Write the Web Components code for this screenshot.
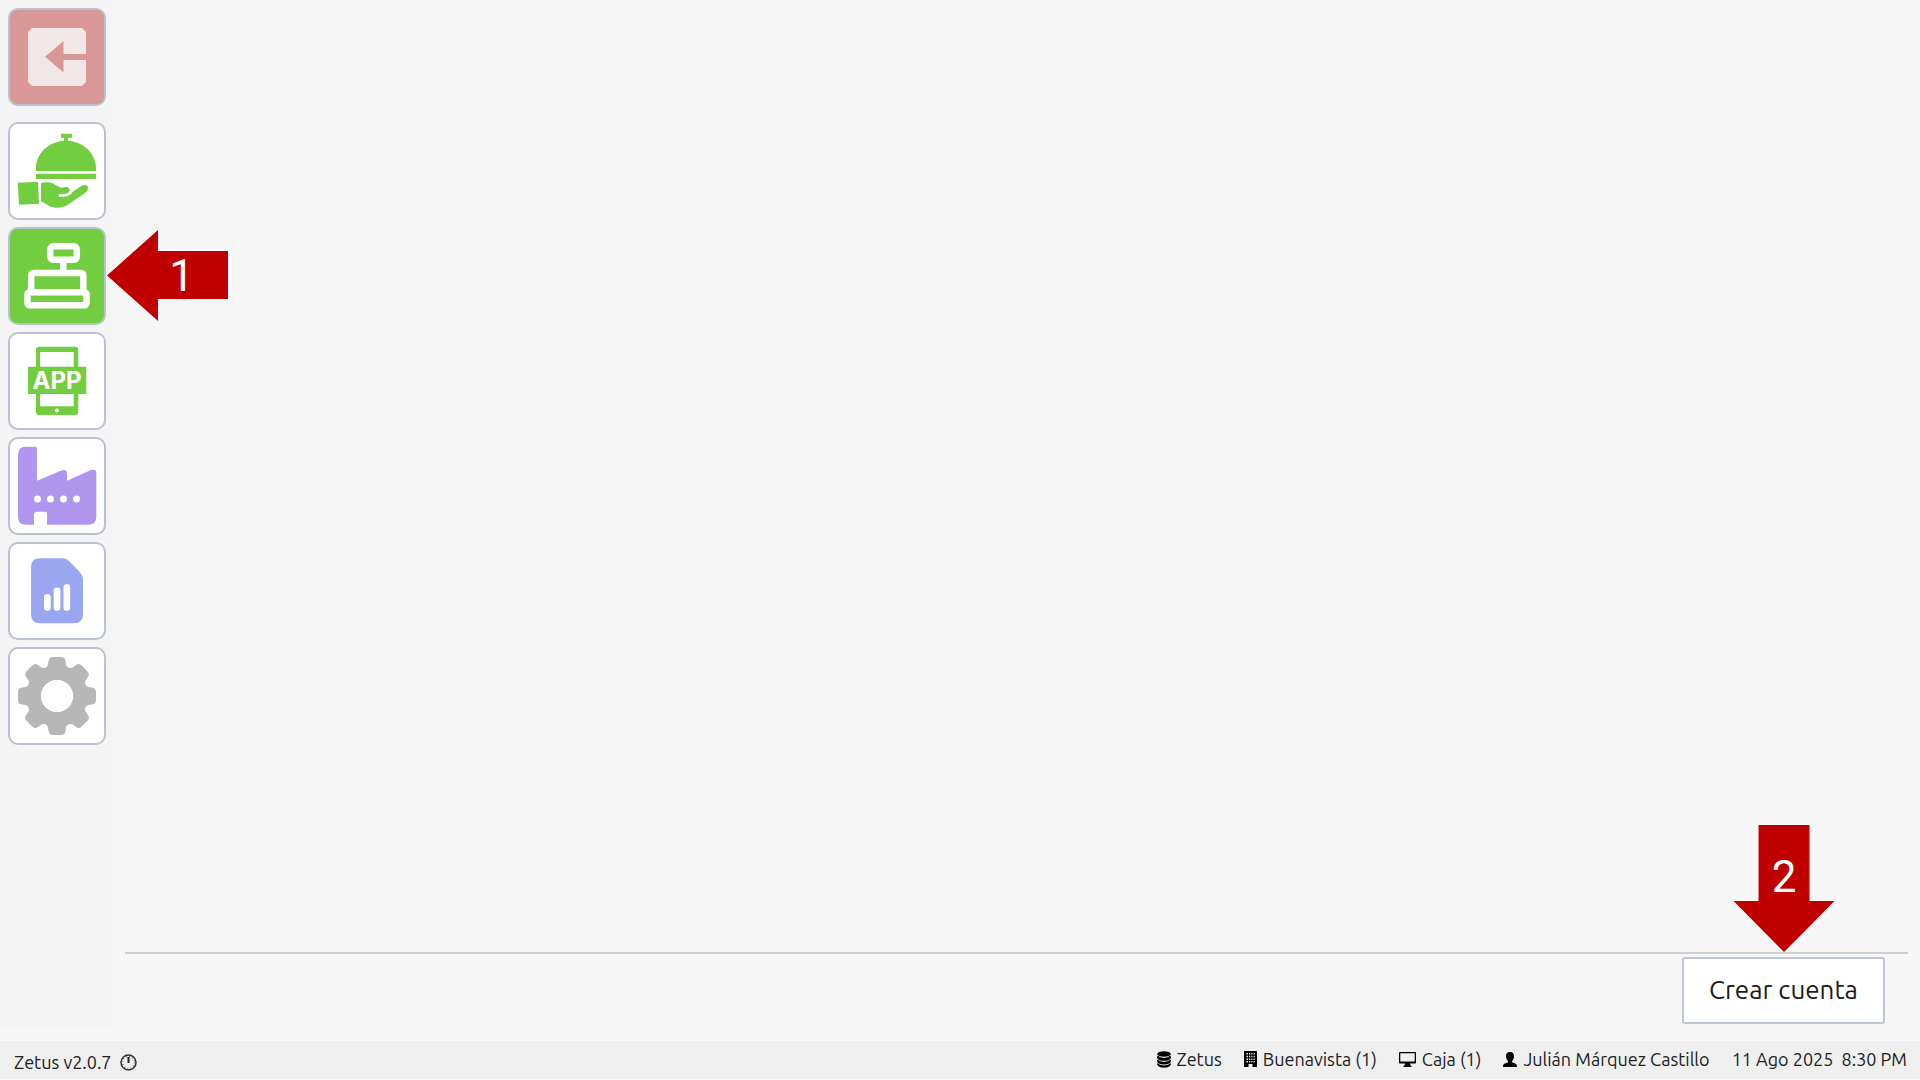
<!DOCTYPE html>
<html lang="es">
<head>
<meta charset="utf-8">
<title>Zetus</title>
<style>
  body {
    margin: 0;
    background: #f7f7f7;
    color: #222;
    font-family: "Ubuntu", "Noto Sans", sans-serif;
  }
</style>
</head>
<body>
<zetus-app></zetus-app>

<script>
// Square button of the side menu, the icon goes in the slot
class NavButton extends HTMLElement {
  constructor() {
    super();
    this.attachShadow({ mode: "open" });
  }

  connectedCallback() {
    this.shadowRoot.innerHTML = `
      <style>
        :host {
          display: block;
          --fill: #fff;
        }
        :host([kind="exit"]) {
          --fill: #d99797;
          margin-bottom: 9px;
        }
        :host([active]) {
          --fill: #73cd40;
        }
        button {
          display: block;
          box-sizing: border-box;
          width: 98px;
          height: 98px;
          padding: 0;
          border: 2px solid #b9c2d0;
          border-radius: 10px;
          background: var(--fill);
          overflow: hidden;
          cursor: pointer;
        }
        ::slotted(svg) {
          display: block;
          width: 94px;
          height: 94px;
        }
      </style>
      <button type="button" aria-label="${this.getAttribute("label")}"><slot></slot></button>
    `;
  }
}
customElements.define("nav-button", NavButton);

// Numbered red arrow, pointing left or down
class StepArrow extends HTMLElement {
  constructor() {
    super();
    this.attachShadow({ mode: "open" });
  }

  connectedCallback() {
    this.shadowRoot.innerHTML = `
      <style>
        :host {
          display: flex;
          align-items: center;
          justify-content: center;
          box-sizing: border-box;
          background: #c00000;
          color: #fff;
          font: 44px/48px "Roboto", sans-serif;
        }
        :host([to="left"]) {
          width: 121px;
          height: 91px;
          padding-left: 28px;
          clip-path: polygon(0 50%, 51px 0, 51px 21px, 100% 21px, 100% 69px, 51px 69px, 51px 100%);
        }
        :host([to="down"]) {
          width: 101px;
          height: 127px;
          padding-bottom: 24px;
          clip-path: polygon(25px 0, 76px 0, 76px 76px, 100% 76px, 50% 100%, 0 76px, 25px 76px);
        }
      </style>
      <slot></slot>
    `;
  }
}
customElements.define("step-arrow", StepArrow);

// One entry of the status bar: icon and text
class StatusItem extends HTMLElement {
  constructor() {
    super();
    this.attachShadow({ mode: "open" });
    this.shadowRoot.innerHTML = `
      <style>
        :host {
          display: flex;
          align-items: center;
          gap: 6px;
          white-space: nowrap;
        }
      </style>
      <slot name="icon"></slot><span><slot></slot></span>
    `;
  }
}
customElements.define("status-item", StatusItem);

class StatusBar extends HTMLElement {
  constructor() {
    super();
    this.attachShadow({ mode: "open" });
  }

  connectedCallback() {
    this.shadowRoot.innerHTML = `
      <style>
        :host {
          display: block;
        }
        footer {
          display: flex;
          justify-content: space-between;
          align-items: flex-start;
          height: 38px;
          box-sizing: border-box;
          padding: 6px 13px 0 14px;
          background: #efefef;
          font-size: 18px;
          line-height: 24px;
        }
        .version {
          display: flex;
          align-items: center;
          gap: 8px;
          padding-top: 3px;
        }
        .info {
          display: flex;
          gap: 22px;
        }
        svg {
          display: block;
          fill: #000;
        }
      </style>
      <footer>
        <div class="version">
          <span>Zetus v2.0.7</span>
          <svg width="17" height="17" viewBox="0 0 17 17">
            <circle cx="8.500" cy="8.500" r="7.500" fill="none" stroke="#333" stroke-width="1.500"/>
            <circle cx="8.500" cy="8.500" r="6" fill="none" stroke="#555" stroke-width="1.500" stroke-dasharray="0.800 2.340"/>
            <path d="M7.500 3h2v6h-2z" fill="#222"/>
          </svg>
        </div>
        <div class="info">
          <status-item>
            <svg slot="icon" width="14" height="17" viewBox="0 0 14 17">
              <ellipse cx="7" cy="3" rx="6.800" ry="2.800"/>
              <path d="M.2 4.600q2.800 2.400 6.800 2.400t6.800-2.400v2.600q-1.500 2.600-6.800 2.600T.2 7.200zM.2 8.600q2.800 2.400 6.800 2.400t6.800-2.400v2.200q-1.500 2.600-6.800 2.600T.2 10.800zM.2 12.100q2.800 2.400 6.800 2.400t6.800-2.400v1.700q-1.500 2.900-6.800 2.900T.2 13.800z"/>
            </svg>Zetus</status-item>
          <status-item>
            <svg slot="icon" width="13" height="16" viewBox="0 0 13 16">
              <path fill-rule="evenodd" d="M0 0h13v16H8.500v-3h-4v3H0zM2.500 2v1.500H4V2zM5 2v1.500h1.200V2zM7.300 2v1.500h1.200V2zM9.600 2v1.500h1.200V2zM2.500 4.700v1.500H4V4.700zM5 4.700v1.500h1.200V4.700zM7.300 4.700v1.500h1.200V4.700zM9.600 4.700v1.500h1.200V4.700zM2.500 7.400v1.500H4V7.400zM5 7.400v1.500h1.200V7.400zM7.300 7.400v1.500h1.200V7.400zM9.600 7.400v1.500h1.200V7.400zM2.500 10.100v1.400H4v-1.400zM5 10.100v1.400h1.200v-1.400zM7.300 10.100v1.400h1.200v-1.400zM9.600 10.100v1.400h1.200v-1.400z"/>
            </svg>Buenavista (1)</status-item>
          <status-item>
            <svg slot="icon" width="17" height="15" viewBox="0 0 17 15">
              <path fill-rule="evenodd" d="M1 0h15q1 0 1 1v9.500q0 1-1 1h-5l.5 2.200h1V15H4.500v-1.300h1l.5-2.200H1q-1 0-1-1V1q0-1 1-1zM1.300 1.300v8.200h14.400V1.300z"/>
            </svg>Caja (1)</status-item>
          <status-item>
            <svg slot="icon" width="14" height="15" viewBox="0 0 14 15">
              <path d="M7 0c3 0 4.200 2 4 4.500-.2 2-1 3.500-2 4.500v1.200l3.800 1.500q1.200.6 1.200 3.300H0q0-2.700 1.200-3.300L5 10.200V9C4 8 3.200 6.500 3 4.500 2.800 2 4 0 7 0z"/>
            </svg>Julián Márquez Castillo</status-item>
          <status-item>11 Ago 2025&nbsp; 8:30 PM</status-item>
        </div>
      </footer>
    `;
  }
}
customElements.define("status-bar", StatusBar);

// Side menu with all the modules
class SideMenu extends HTMLElement {
  constructor() {
    super();
    this.attachShadow({ mode: "open" });
  }

  getGear() {
    let teeth = "";
    for (let a = 0; a < 360; a += 45) {
      teeth += `<path transform="rotate(${a} 49 49)" d="M35 22Q40 20 40 17L41 12Q42 10 45 10H53Q56 10 57 12L58 17Q58 20 63 22L58 30H40z"/>`;
    }
    return `
      <svg viewBox="2 2 94 94" fill="#b7b7b7">
        ${teeth}
        <circle cx="49" cy="49" r="23" fill="none" stroke="#b7b7b7" stroke-width="14"/>
        <circle cx="49" cy="49" r="16" fill="#fff"/>
      </svg>`;
  }

  connectedCallback() {
    this.shadowRoot.innerHTML = `
      <style>
        :host {
          display: block;
          background: #f4f4f4;
        }
        nav {
          display: flex;
          flex-direction: column;
          gap: 7px;
          padding: 8px 7px 8px 8px;
        }
        text {
          font: bold 24px "Inter", sans-serif;
        }
      </style>
      <nav>
        <nav-button kind="exit" label="Salir">
          <svg viewBox="2 2 94 94">
            <path fill="#f2e7e7" d="M24 20H74L78 24V46H55.500V33L37 48.700L55.500 64.500V52H78V74L74 78H24L20 74V24z"/>
          </svg>
        </nav-button>
        <nav-button label="Servicio">
          <svg viewBox="2 2 94 94" fill="#73cd40">
            <path d="M53 11.700H64V15.700H60V18.800C76 20 88 32 88 46V49H28V46C28 32 40 20 56 18.800V15.700H53z"/>
            <path d="M28 51.700H88V57H28zM9.700 60.700L30 59.700L31 81.700L11 82.700z"/>
            <path d="M33 61Q37 60 41 60.300C46 61 49 65 53.700 65.700C56 65 57 64.700 59 65Q62 66 61.700 68.500C61 71 59 71.700 57 72L51 72.300Q49.500 74.700 52 74.800C57 75 60 74.500 62.500 72.500L65 69.500L74 63.500C78 62 80.500 63.500 80 66.500Q79.500 69.500 77 71L61 82C57 85 52 86 47 85.700C41 85 38 81.500 33 79.300z"/>
          </svg>
        </nav-button>
        <nav-button label="Caja" active>
          <svg viewBox="2 2 94 94" fill="none" stroke="#fff" stroke-width="6.500">
            <rect x="42.300" y="19.300" width="26.500" height="13.500" rx="3"/>
            <path d="M55.300 35V44M23.200 64V49Q23.200 46 26 46H72.500Q75.300 46 75.300 49V64"/>
            <rect x="19.500" y="65.300" width="59" height="13" rx="2"/>
          </svg>
        </nav-button>
        <nav-button label="App">
          <svg viewBox="2 2 94 94" fill="#73cd40">
            <path fill-rule="evenodd" d="M31 14.700H67.300Q70.300 14.700 70.300 18V80Q70.300 83 67.300 83H31Q28 83 28 80V18Q28 14.700 31 14.700zM32 20V74.300H65.700V20z"/>
            <path d="M20 34.700H78.300V62H20z"/>
            <circle cx="49" cy="78.500" r="2" fill="#fff"/>
            <text x="49" y="57" text-anchor="middle" fill="#fff">APP</text>
          </svg>
        </nav-button>
        <nav-button label="Producción">
          <svg viewBox="2 2 94 94" fill="#b096ee">
            <path d="M18 9.700H27Q29 9.700 29 12V43.700L54 33.200Q59 32 59 36V43.700L83 33Q88.300 31.500 88.300 36V79.700Q88.300 87.700 80.300 87.700H39V76.700Q39 74.700 37 74.700H29Q26 74.700 26 77.700V87.700H18Q10 87.700 10 79.700V17.700Q10 9.700 18 9.700z"/>
            <g fill="#fff">
              <circle cx="29.500" cy="62" r="3.500"/>
              <circle cx="42.500" cy="62" r="3.500"/>
              <circle cx="55.500" cy="62" r="3.500"/>
              <circle cx="68.500" cy="62" r="3.500"/>
            </g>
          </svg>
        </nav-button>
        <nav-button label="Reportes">
          <svg viewBox="2 2 94 94" fill="#9aa6f0">
            <path d="M32 16.300H55.500Q58.500 16.300 61 19L72 30.300Q75 33.500 75 38V72.300Q75 81.300 66 81.300H32Q23 81.300 23 72.300V25.300Q23 16.300 32 16.300z"/>
            <g fill="#fff">
              <rect x="36" y="52" width="6.700" height="16.700" rx="3.300"/>
              <rect x="45.700" y="45.500" width="6.700" height="23.200" rx="3"/>
              <rect x="55.500" y="42.300" width="6.700" height="26.400" rx="3"/>
            </g>
          </svg>
        </nav-button>
        <nav-button label="Configuración">${this.getGear()}</nav-button>
      </nav>
    `;
  }
}
customElements.define("side-menu", SideMenu);

class ZetusApp extends HTMLElement {
  constructor() {
    super();
    this.attachShadow({ mode: "open" });
  }

  connectedCallback() {
    this.shadowRoot.innerHTML = `
      <style>
        :host {
          display: grid;
          grid-template: 1fr auto / auto 1fr;
          row-gap: 12px;
          min-height: 100vh;
          box-sizing: border-box;
          padding-bottom: 1px;
        }
        main {
          display: flex;
          flex-direction: column;
          padding: 0 12px;
        }
        .work {
          flex: 1;
        }
        .actions {
          display: flex;
          justify-content: flex-end;
          padding: 3px 23px 5px;
          border-top: 2px solid #cdcfd1;
        }
        .action {
          position: relative;
        }
        .action button {
          height: 67px;
          padding: 0 25px 2px;
          border: 2px solid #bcc6d4;
          border-radius: 3px;
          background: #fff;
          color: #1c1c1c;
          font: 26px/32px "Ubuntu", "Noto Sans", sans-serif;
          cursor: pointer;
        }
        status-bar {
          grid-column: 1 / -1;
        }
        step-arrow {
          position: absolute;
        }
        .one {
          left: 107px;
          top: 230px;
        }
        .two {
          left: calc(50% - 50px);
          bottom: calc(100% + 5px);
        }
      </style>
      <side-menu></side-menu>
      <step-arrow class="one" to="left">1</step-arrow>
      <main>
        <div class="work"></div>
        <div class="actions">
          <div class="action">
            <button type="button">Crear cuenta</button>
            <step-arrow class="two" to="down">2</step-arrow>
          </div>
        </div>
      </main>
      <status-bar></status-bar>
    `;
  }
}
customElements.define("zetus-app", ZetusApp);
</script>
</body>
</html>
